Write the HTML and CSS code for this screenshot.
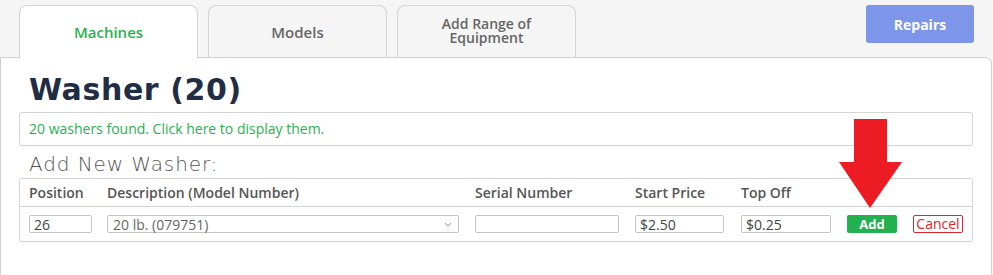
FILE: index.html
```html
<!DOCTYPE html>
<html>
<head>
  <title>Washers</title>
  <link rel="stylesheet" href="styles.css">
</head>
<body>
  <div class="topbar">
    <div class="tab active">Machines</div>
    <div class="tab">Models</div>
    <div class="tab two-line"><span>Add Range of</span><span>Equipment</span></div>
    <button class="repairs">Repairs</button>
  </div>
  <div class="panel">
    <h1 class="title">Washer (20)</h1>
    <div class="found">20 washers found. Click here to display them.</div>
    <h2 class="subtitle">Add New Washer:</h2>
    <div class="add-table">
      <div class="row head">
        <div>Position</div>
        <div>Description (Model Number)</div>
        <div>Serial Number</div>
        <div>Start Price</div>
        <div>Top Off</div>
        <div></div>
        <div></div>
      </div>
      <div class="row body">
        <div><input class="in pos" type="text" value="26"></div>
        <div>
          <div class="select">
            <span>20 lb. (079751)</span>
            <svg width="8" height="5" viewBox="0 0 8 5"><path d="M1 1 L4 4 L7 1" fill="none" stroke="#999" stroke-width="1"/></svg>
          </div>
        </div>
        <div><input class="in serial" type="text" value=""></div>
        <div><input class="in price" type="text" value="$2.50"></div>
        <div><input class="in topoff" type="text" value="$0.25"></div>
        <div><button class="btn-add">Add</button></div>
        <div><button class="btn-cancel">Cancel</button></div>
      </div>
    </div>
    <svg class="arrow" width="64" height="90" viewBox="0 0 64 90">
      <polygon points="15,0 48,0 48,43 63,43 31,89 0,43 15,43" fill="#ed1c24"/>
    </svg>
  </div>
</body>
</html>
```

FILE: styles.css
```css
body {
  margin: 0;
  background-color: #f5f5f5;
  font-family: "Open Sans", "Liberation Sans", sans-serif;
  color: #555;
}
.topbar {
  display: flex;
  align-items: flex-start;
  padding: 5px 19px 0 19px;
  height: 52px;
}
.tab {
  width: 177px;
  height: 51px;
  margin-right: 10px;
  border: 1px solid #d4d4d4;
  border-bottom: none;
  border-radius: 8px 8px 0 0;
  background-color: #f5f5f5;
  display: flex;
  align-items: center;
  justify-content: center;
  text-align: center;
  font-size: 15px;
  font-weight: 600;
  color: #666;
}
.tab.two-line {
  flex-direction: column;
  justify-content: flex-start;
  padding-top: 11px;
  height: 40px;
  font-size: 14px;
  line-height: 14px;
}
.tab.active {
  background-color: #fff;
  color: #2ab24f;
  height: 52px;
  position: relative;
  z-index: 1;
}
.repairs {
  margin-left: auto;
  width: 108px;
  height: 38px;
  border: none;
  border-radius: 3px;
  background-color: #7d96ea;
  color: #fff;
  font-family: "Open Sans", "Liberation Sans", sans-serif;
  font-size: 14px;
  font-weight: 700;
}
.panel {
  position: relative;
  background-color: #fff;
  border: 1px solid #cfcfcf;
  border-radius: 0 6px 0 0;
  margin-right: 1px;
  padding: 0 18px;
  height: 240px;
}
.title {
  margin: 12px 0 0 10px;
  font-family: "DejaVu Sans", sans-serif;
  font-size: 30px;
  font-weight: bold;
  color: #1f2d45;
  line-height: 40px;
  letter-spacing: 0.6px;
}
.found {
  margin-top: 2px;
  border: 1px solid #d4d4d4;
  border-radius: 3px;
  height: 32px;
  line-height: 32px;
  padding-left: 9px;
  font-size: 14px;
  color: #2ab24f;
}
.subtitle {
  margin: 6px 0 0 10px;
  font-family: "DejaVu Sans", sans-serif;
  font-weight: 200;
  font-size: 20px;
  line-height: 25px;
  letter-spacing: 0.9px;
  color: #555;
}
.add-table {
  margin-top: 1px;
  border: 1px solid #d4d4d4;
  border-radius: 3px;
}
.row {
  display: grid;
  grid-template-columns: 78px 368px 160px 106px 106px 66px 1fr;
  padding-left: 9px;
  align-items: center;
}
.row.head {
  height: 27px;
  border-bottom: 1px solid #d4d4d4;
  font-size: 14px;
  font-weight: 600;
  color: #555;
}
.row.body {
  height: 34px;
}
.in {
  box-sizing: border-box;
  height: 18px;
  border: 1px solid #c4c4c4;
  border-radius: 2px;
  padding: 0 4px;
  font-family: "Open Sans", "Liberation Sans", sans-serif;
  font-size: 14px;
  color: #444;
  display: block;
}
.pos { width: 63px; }
.serial { width: 144px; }
.price { width: 89px; }
.topoff { width: 90px; }
.select {
  box-sizing: border-box;
  width: 352px;
  height: 18px;
  border: 1px solid #c4c4c4;
  border-radius: 2px;
  padding: 0 6px 0 5px;
  font-size: 14px;
  color: #666;
  display: flex;
  align-items: center;
  justify-content: space-between;
}
.btn-add {
  display: block;
  width: 50px;
  height: 18px;
  border: none;
  border-radius: 2px;
  background-color: #21b14f;
  color: #fff;
  font-family: "Open Sans", "Liberation Sans", sans-serif;
  font-size: 13px;
  font-weight: 700;
  padding: 0;
}
.btn-cancel {
  display: block;
  width: 50px;
  height: 18px;
  border: 1px solid #e0242a;
  border-radius: 2px;
  background-color: #fff;
  color: #e0242a;
  font-family: "Open Sans", "Liberation Sans", sans-serif;
  font-size: 14px;
  line-height: 14px;
  padding: 0;
}
.arrow {
  position: absolute;
  left: 838px;
  top: 61px;
}
```
